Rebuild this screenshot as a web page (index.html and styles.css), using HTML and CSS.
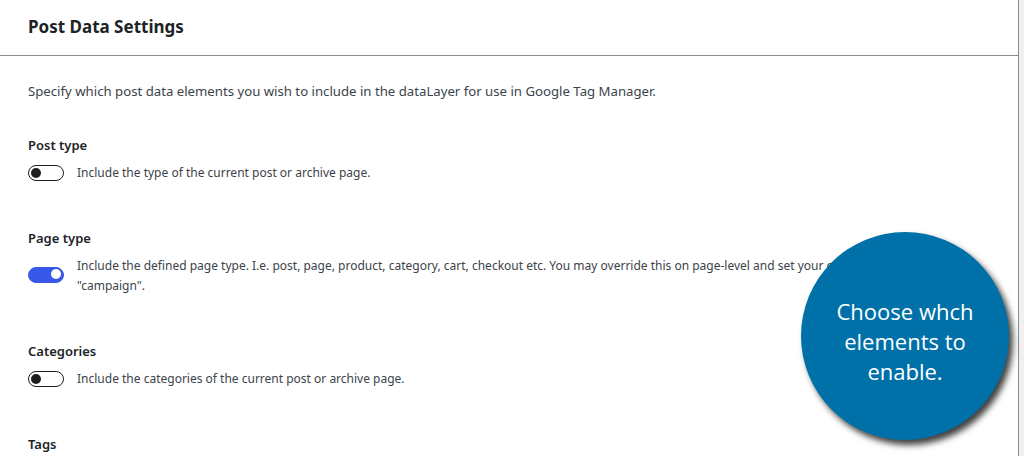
FILE: index.html
```html
<!DOCTYPE html>
<html lang="en">
<head>
<meta charset="utf-8">
<title>Post Data Settings</title>
<link rel="stylesheet" href="styles.css">
</head>
<body>
<div class="page">
  <section class="panel">
    <header class="panel-header">
      <h2 class="panel-title">Post Data Settings</h2>
    </header>
    <div class="panel-body">
      <p class="intro">Specify which post data elements you wish to include in the dataLayer for use in Google Tag Manager.</p>

      <div class="field">
        <div class="field-label">Post type</div>
        <label class="field-row">
          <span class="toggle"></span>
          <span class="field-desc">Include the type of the current post or archive page.</span>
        </label>
      </div>

      <div class="field">
        <div class="field-label">Page type</div>
        <label class="field-row">
          <span class="toggle is-on"></span>
          <span class="field-desc">Include the defined page type. I.e. post, page, product, category, cart, checkout etc. You may override this on page-level and set your own page type, e.g. "campaign".</span>
        </label>
      </div>

      <div class="field">
        <div class="field-label">Categories</div>
        <label class="field-row">
          <span class="toggle"></span>
          <span class="field-desc">Include the categories of the current post or archive page.</span>
        </label>
      </div>

      <div class="field">
        <div class="field-label">Tags</div>
      </div>
    </div>
  </section>
  <div class="callout">
    <span>Choose whch elements to enable.</span>
  </div>
</div>
</body>
</html>
```

FILE: styles.css
```css
html, body {
  margin: 0;
  padding: 0;
  height: 100%;
  overflow: hidden;
  background: #f0f0f1;
}

body {
  font-family: "Noto Sans", "Open Sans", sans-serif;
  color: #3c434a;
  font-size: 13px;
}

.page {
  position: relative;
  width: 1024px;
  height: 456px;
}

.panel {
  width: 1018px;
  height: 456px;
  background: #ffffff;
  border-right: 1px solid #8c8c8f;
  box-sizing: content-box;
}

.panel-header {
  height: 56px;
  border-bottom: 1px solid #8c8c8f;
  padding: 0 28px;
  display: flex;
  align-items: center;
  box-sizing: border-box;
}

.panel-title {
  margin: 0 0 2px;
  font-size: 17px;
  font-weight: 700;
  color: #1d2327;
  line-height: 24px;
}

.panel-body {
  padding: 25px 28px 0;
}

.intro {
  margin: 0 0 34px;
  font-size: 13.2px;
  line-height: 20px;
}

.field {
  margin-bottom: 45px;
}

.field-label {
  font-size: 13px;
  font-weight: 600;
  color: #1d2327;
  line-height: 20px;
  margin-bottom: 8px;
}

.field-row {
  display: flex;
  align-items: center;
  gap: 13px;
  max-width: 940px;
}

.field-desc {
  font-size: 12px;
  line-height: 20px;
}

.toggle {
  position: relative;
  flex: none;
  width: 36px;
  height: 16px;
  border: 1.5px solid #1e1e1e;
  border-radius: 9px;
  box-sizing: border-box;
  background: #ffffff;
}

.toggle::after {
  content: "";
  position: absolute;
  top: 1.5px;
  left: 2px;
  width: 10px;
  height: 10px;
  border-radius: 50%;
  background: #1e1e1e;
}

.toggle.is-on {
  background: #3858e9;
  border-color: #3858e9;
  margin-top: -3px;
}

.toggle.is-on::after {
  left: auto;
  right: 2px;
  background: #ffffff;
}

.callout {
  position: absolute;
  left: 801px;
  top: 232px;
  width: 208px;
  height: 208px;
  border-radius: 50%;
  background: #0071a8;
  box-shadow: 4px 5px 6px rgba(0, 0, 0, 0.75);
  display: flex;
  align-items: center;
  justify-content: center;
  text-align: center;
}

.callout span {
  display: block;
  width: 160px;
  margin-top: 10px;
  color: #ffffff;
  font-family: "Open Sans", "Noto Sans", sans-serif;
  font-size: 22px;
  line-height: 30px;
}
```
